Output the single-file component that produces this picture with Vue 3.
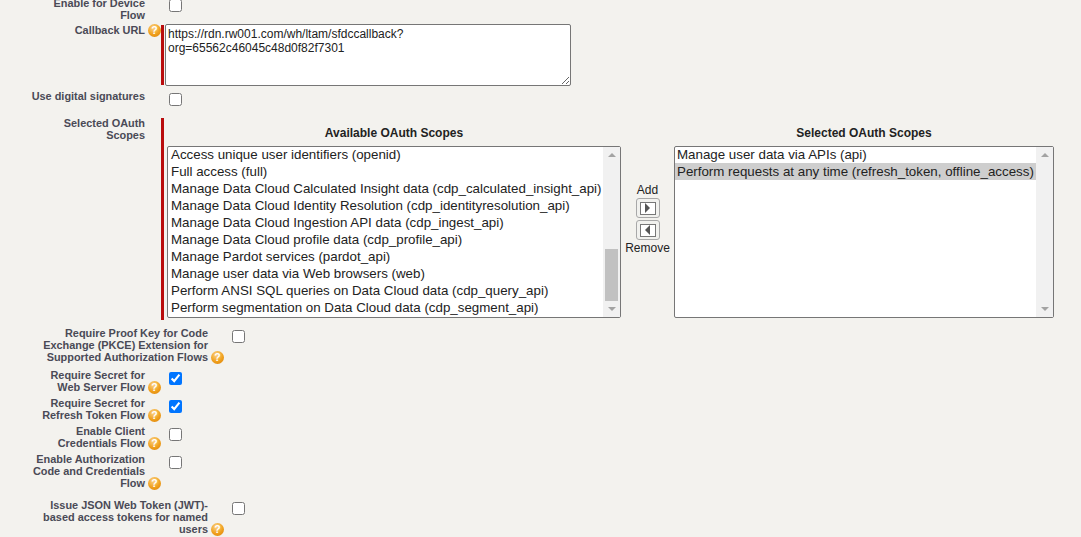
<template>
  <div class="page">
    <div class="row first">
      <div class="label">Enable for Device<br />Flow</div>
      <div class="help-slot"></div>
      <div class="field"><input type="checkbox" class="check" /></div>
    </div>

    <div class="row callback">
      <div class="label">Callback URL</div>
      <div class="help-slot"><span class="help">?</span></div>
      <div class="required-bar short"></div>
      <textarea class="url" readonly :value="callbackUrl"></textarea>
    </div>

    <div class="row signatures">
      <div class="label">Use digital signatures</div>
      <div class="help-slot"></div>
      <div class="field"><input type="checkbox" class="check" /></div>
    </div>

    <div class="row scopes">
      <div class="label">Selected OAuth<br />Scopes</div>
      <div class="help-slot"></div>
      <div class="required-bar"></div>
      <div class="picker">
        <div class="picker-col left-col">
          <div class="picker-title">Available OAuth Scopes</div>
          <div class="listbox">
            <div class="options">
              <div v-for="item in available" :key="item" class="option">{{ item }}</div>
            </div>
            <div class="scrollbar">
              <span class="arrow up"></span>
              <div class="track"><div class="thumb"></div></div>
              <span class="arrow down"></span>
            </div>
          </div>
        </div>
        <div class="mover">
          <div>Add</div>
          <button class="move-btn first-btn"><span class="move-inner"><i class="tri right"></i></span></button>
          <button class="move-btn"><span class="move-inner"><i class="tri left"></i></span></button>
          <div class="remove">Remove</div>
        </div>
        <div class="picker-col right-col">
          <div class="picker-title">Selected OAuth Scopes</div>
          <div class="listbox">
            <div class="options tight">
              <div class="option">Manage user data via APIs (api)</div>
              <div class="option"><span class="selected">Perform requests at any time (refresh_token, offline_access)</span></div>
            </div>
            <div class="scrollbar">
              <span class="arrow up"></span>
              <div class="track"></div>
              <span class="arrow down"></span>
            </div>
          </div>
        </div>
      </div>
    </div>

    <div v-for="opt in options" :key="opt.id" class="row option-row" :class="[opt.wide ? 'wide' : '', opt.id]">
      <div class="label">
        <template v-for="(line, i) in opt.lines" :key="i">{{ line }}<span v-if="i === opt.lines.length - 1" class="help inline-help">?</span><br v-else /></template>
      </div>
      <div class="field"><input type="checkbox" class="check" :checked="opt.checked" /></div>
    </div>
  </div>
</template>

<script setup>
const callbackUrl = 'https://rdn.rw001.com/wh/ltam/sfdccallback?org=65562c46045c48d0f82f7301'

const available = [
  'Access unique user identifiers (openid)',
  'Full access (full)',
  'Manage Data Cloud Calculated Insight data (cdp_calculated_insight_api)',
  'Manage Data Cloud Identity Resolution (cdp_identityresolution_api)',
  'Manage Data Cloud Ingestion API data (cdp_ingest_api)',
  'Manage Data Cloud profile data (cdp_profile_api)',
  'Manage Pardot services (pardot_api)',
  'Manage user data via Web browsers (web)',
  'Perform ANSI SQL queries on Data Cloud data (cdp_query_api)',
  'Perform segmentation on Data Cloud data (cdp_segment_api)'
]

const options = [
  { id: 'pkce', wide: true, lines: ['Require Proof Key for Code', 'Exchange (PKCE) Extension for', 'Supported Authorization Flows'] },
  { id: 'web', checked: true, lines: ['Require Secret for', 'Web Server Flow'] },
  { id: 'refresh', checked: true, lines: ['Require Secret for', 'Refresh Token Flow'] },
  { id: 'client', lines: ['Enable Client', 'Credentials Flow'] },
  { id: 'auth', lines: ['Enable Authorization', 'Code and Credentials', 'Flow'] },
  { id: 'jwt', wide: true, lines: ['Issue JSON Web Token (JWT)-', 'based access tokens for named', 'users'] }
]
</script>

<style>
html, body {
  margin: 0;
  height: 100%;
  overflow: hidden;
  background: #f3f2ee;
}
</style>

<style scoped>
.page {
  height: 537px;
  overflow: hidden;
  font-family: "Liberation Sans", Arial, sans-serif;
  font-size: 12px;
  color: #222;
}
.row {
  display: flex;
  align-items: flex-start;
}
.label {
  flex: 0 0 145px;
  box-sizing: border-box;
  text-align: right;
  font-size: 10.92px;
  font-weight: bold;
  line-height: 12px;
  color: #4a4a56;
}
.help-slot {
  flex: 0 0 16px;
  display: flex;
  justify-content: flex-end;
}
.help {
  display: inline-block;
  width: 13px;
  height: 13px;
  border-radius: 50%;
  background: radial-gradient(circle at 42% 30%, #fbd58a, #f0a01c 55%, #d97f08);
  color: #fff;
  font-size: 10.5px;
  font-weight: bold;
  line-height: 13px;
  text-align: center;
}
.inline-help {
  margin-left: 3px;
  margin-right: -16px;
  margin-top: -2px;
  margin-bottom: -2px;
  vertical-align: baseline;
}
.field {
  padding-left: 8px;
}
.check {
  display: block;
  width: 13px;
  height: 13px;
  margin: 0;
}
.required-bar {
  flex: 0 0 3px;
  height: 202px;
  margin-top: 1px;
  background: #b90d0d;
}
.required-bar.short {
  height: 60px;
}

.first {
  margin-top: -3px;
  height: 27px;
}
.first .field {
  padding-top: 2px;
}
.callback {
  height: 66px;
}
.url {
  flex: none;
  width: 406px;
  height: 62px;
  box-sizing: border-box;
  margin: 0 0 0 1px;
  padding: 2px;
  border: 1px solid #767676;
  border-radius: 2px;
  background: #fff;
  font-family: "Liberation Sans", Arial, sans-serif;
  font-size: 12px;
  line-height: 14px;
  color: #222;
  outline: none;
}
.signatures {
  height: 27px;
}
.signatures .field {
  padding-top: 3px;
}
.scopes {
  height: 210px;
}
.picker {
  display: flex;
  align-items: flex-start;
  margin-top: 1px;
  padding-left: 3px;
}
.picker-col {
  display: flex;
  flex-direction: column;
}
.left-col {
  width: 454px;
}
.right-col {
  width: 380px;
}
.picker-title {
  height: 28px;
  box-sizing: border-box;
  padding-top: 8px;
  font-weight: bold;
  line-height: 14px;
  text-align: center;
  color: #222;
}
.listbox {
  display: flex;
  height: 172px;
  box-sizing: border-box;
  border: 1px solid #767676;
  border-radius: 2px;
  background: #fff;
}
.options {
  flex: 1;
  min-width: 0;
  margin-top: -1px;
  overflow: hidden;
}
.option {
  height: 17px;
  padding-left: 3px;
  font-size: 13.33px;
  line-height: 17px;
  white-space: nowrap;
  color: #222;
}
.tight .option {
  padding-left: 2px;
}
.selected {
  display: block;
  margin-left: -2px;
  padding-left: 2px;
  background: #cecece;
}
.scrollbar {
  flex: 0 0 17px;
  display: flex;
  flex-direction: column;
  align-items: center;
  background: #f1f1f1;
}
.arrow {
  width: 0;
  height: 0;
  flex: none;
  margin: 6px 0;
  border-left: 4px solid transparent;
  border-right: 4px solid transparent;
}
.arrow.up {
  border-bottom: 4px solid #a3a3a3;
}
.arrow.down {
  border-top: 4px solid #a3a3a3;
}
.track {
  flex: 1;
  align-self: stretch;
  display: flex;
  flex-direction: column;
  justify-content: flex-end;
  padding: 0 2px;
}
.thumb {
  height: 52px;
  background: #c1c1c1;
}
.mover {
  flex: 0 0 53px;
  display: flex;
  flex-direction: column;
  align-items: center;
  padding-top: 65px;
  line-height: 14px;
  color: #222;
}
.move-btn {
  display: flex;
  align-items: center;
  justify-content: center;
  width: 24px;
  height: 20px;
  padding: 0;
  margin-top: 2px;
  border: 1px solid #a8a8a8;
  border-radius: 3px;
  background: #f1f1ee;
}
.first-btn {
  margin-top: 1px;
}
.move-inner {
  display: flex;
  align-items: center;
  justify-content: center;
  width: 16px;
  height: 13px;
  box-sizing: border-box;
  border: 1px solid #777;
  background: #fff;
}
.tri {
  display: block;
  width: 0;
  height: 0;
  border-top: 5px solid transparent;
  border-bottom: 5px solid transparent;
}
.tri.right {
  border-left: 5px solid #555;
}
.tri.left {
  border-right: 5px solid #555;
}
.remove {
  margin-top: 1px;
}

.option-row .field {
  padding-left: 24px;
  padding-top: 3px;
}
.option-row.wide .label {
  flex-basis: 208px;
}
.pkce { height: 42px; }
.web, .refresh, .client { height: 28px; }
.auth { height: 46px; }
.jwt { height: 40px; }
</style>
